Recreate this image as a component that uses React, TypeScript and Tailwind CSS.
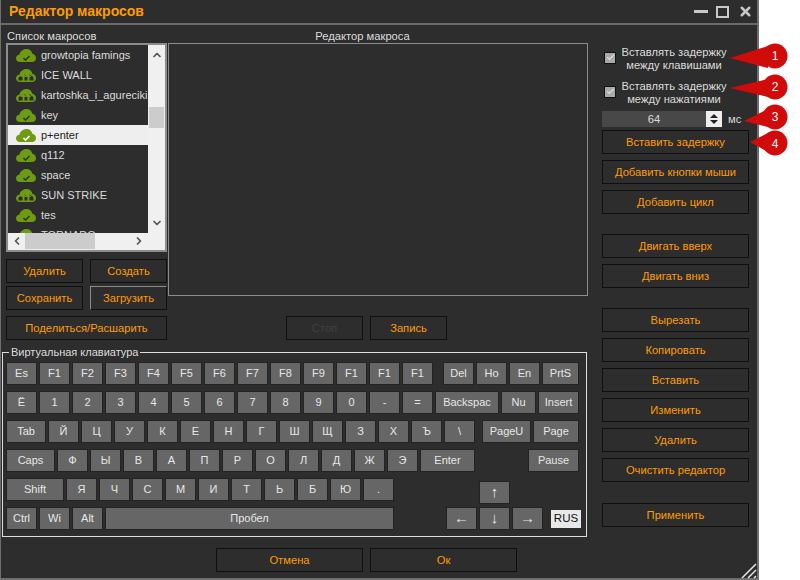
import React from "react";
import { ChevronUp, ChevronDown, ChevronLeft, ChevronRight, Check, X } from "lucide-react";

const font = { fontFamily: '"Liberation Sans", Arial, sans-serif' };

const macros = [
  { name: "growtopia famings", ok: true },
  { name: "ICE WALL", ok: false },
  { name: "kartoshka_i_agureciki", ok: false },
  { name: "key", ok: true },
  { name: "p+enter", ok: true, active: true },
  { name: "q112", ok: true },
  { name: "space", ok: true },
  { name: "SUN STRIKE", ok: false },
  { name: "tes", ok: true },
  { name: "TORNADO", ok: false },
];

type K = string | { t: string; c: string };

const rows: K[][] = [
  ["Es", "F1", "F2", "F3", "F4", "F5", "F6", "F7", "F8", "F9", "F1", "F1", "F1",
    { t: "Del", c: "w-[31px] ml-[8px]" }, "Ho", "En", { t: "PrtS", c: "w-[37px]" }],
  ["Ё", "1", "2", "3", "4", "5", "6", "7", "8", "9", "0", "-", "=",
    { t: "Backspac", c: "w-[64px]" }, { t: "Nu", c: "w-[35px]" }, { t: "Insert", c: "w-[41px]" }],
  [{ t: "Tab", c: "w-[40px]" }, "Й", "Ц", "У", "К", "Е", "Н", "Г", "Ш", "Щ", "З", "Х", "Ъ", "\\",
    { t: "PageU", c: "w-[49px] ml-[5px]" }, { t: "Page", c: "w-[46px]" }],
  [{ t: "Caps", c: "w-[49px]" }, "Ф", "Ы", "В", "А", "П", "Р", "О", "Л", "Д", "Ж", "Э",
    { t: "Enter", c: "w-[55px]" }, { t: "Pause", c: "w-[51px] ml-[51px]" }],
  [{ t: "Shift", c: "w-[58px]" }, "Я", "Ч", "С", "М", "И", "Т", "Ь", "Б", "Ю", ".",
    { t: "↑", c: "w-[31px] ml-[83px] mt-[3px]" }],
  ["Ctrl", "Wi", "Alt", { t: "Пробел", c: "w-[289px]" },
    { t: "←", c: "w-[31px] ml-[50px]" }, "↓", "→"],
];

const rightTop = ["Вставить задержку", "Добавить кнопки мыши", "Добавить цикл"];
const rightMove = ["Двигать вверх", "Двигать вниз"];
const rightEdit = ["Вырезать", "Копировать", "Вставить", "Изменить", "Удалить", "Очистить редактор"];

const cloudPath =
  "M4 14C1.600 14 0 12.400 0 10.300 0 8.300 1.500 6.800 3.400 6.700 4 3.500 7 1 10.500 1 13.600 1 15.800 3 16.300 5.800 18.500 6.200 20 8 20 10.200 20 12.400 18.400 14 16 14z";

const Cloud = ({ ok, active }: { ok: boolean; active?: boolean }) => (
  <svg width="20" height="15" viewBox="0 0 20 15" className="shrink-0">
    <path d={cloudPath} fill="#6d9c12" />
    {ok ? (
      <path
        d="M7.500 10l2 2 4-4"
        fill="none"
        stroke={active ? "#ffffff" : "#33381f"}
        strokeWidth="1.700"
      />
    ) : (
      <>
        <path d="M2.500 12.500h15V10.500c0-1.500-1-2.500-2.500-2.700L13.500 6 11.500 8.500H10.500L8 6 6 8.500C4 8 2.500 9 2.500 10.500z" fill="#2d2d2d" />
        <path d="M6.500 13V9H4.800L7.500 5.500 10.200 9H8.500v4zM11.500 13V9H9.800l2.700-3.500L15.200 9H13.500v4z" fill="#6d9c12" />
      </>
    )}
  </svg>
);

const Btn = ({ children, className = "", dim }: { children: React.ReactNode; className?: string; dim?: boolean }) => (
  <button
    className={`h-[24px] flex items-center justify-center border border-[#0f0f0f] text-[11.200px] ${dim ? "text-[#404040]" : "text-[#ff9c00]"} ${className}`}
  >
    {children}
  </button>
);

const Key = ({ k }: { k: K }) => {
  const label = typeof k === "string" ? k : k.t;
  const cls = typeof k === "string" ? "w-[31px]" : k.c;
  const arrow = label === "←" || label === "→" || label === "↑" || label === "↓";
  return (
    <div className={`h-[23px] shrink-0 overflow-hidden flex items-center justify-center bg-[#666666] border border-[#232323] text-[#e6e6e6] ${arrow ? "text-[15px]" : "text-[11px]"} ${cls}`}>
      {label}
    </div>
  );
};

const DelayOption = ({ top, bottom, className = "" }: { top: string; bottom: string; className?: string }) => (
  <div className={`flex items-center h-[28px] text-[11.200px] leading-[13.500px] text-[#dcdcdc] ${className}`}>
    <div className="w-[12px] h-[12px] ml-[2px] -mt-[3px] shrink-0 flex items-center justify-center bg-[#a9a9a9] border border-[#111111]">
      <Check size={9} strokeWidth={3} className="text-[#dddddd]" />
    </div>
    <div className="ml-[1px] w-[114px] shrink-0 text-center whitespace-nowrap">
      {top}
      <br />
      {bottom}
    </div>
  </div>
);

export default function App() {
  return (
    <div className="relative w-[800px] h-[580px] bg-white overflow-hidden" style={font}>
      <div className="w-[759px] h-[580px] flex flex-col bg-[#2d2d2d] border-l border-r-2 border-b-2 border-[#6f6f6f]">
        {/* TITLE */}
        <div className="h-[25px] shrink-0 flex items-center border-b-2 border-[#6a6a6a]">
          <div className="ml-[8px] text-[14px] font-bold text-[#ff9c00]">Редактор макросов</div>
          <div className="ml-auto flex items-center text-[#c8c8c8]">
            <div className="w-[14px] h-[3px] bg-[#c8c8c8]" />
            <div className="w-[13px] h-[12px] ml-[8px] border-2 border-[#c8c8c8]" />
            <X size={15} strokeWidth={4} className="ml-[9px] mr-[4px]" />
          </div>
        </div>

        <div className="flex-1 flex">
          {/* LEFT */}
          <div className="w-[587px] shrink-0">
            <div className="flex h-[315px]">
              <div className="w-[161px] ml-[5px] shrink-0">
                <div className="h-[18px] pl-[1px] pt-[4px] text-[11.200px] leading-[14px] text-[#dcdcdc]">Список макросов</div>

                {/* LIST */}
                <div className="relative h-[209px] border-2 border-[#8c8c8c] overflow-hidden">
                  {macros.map((m) => (
                    <div
                      key={m.name}
                      className={`h-[20px] w-[140px] flex items-center pl-[8px] gap-[5px] text-[11px] whitespace-nowrap ${m.active ? "bg-[#eeeeee] text-[#222222]" : "text-[#dcdcdc]"}`}
                    >
                      <Cloud ok={m.ok} active={m.active} />
                      {m.name}
                    </div>
                  ))}
                  <div className="absolute top-0 right-0 w-[17px] h-full bg-[#f0f0f0]">
                    <ChevronUp size={12} strokeWidth={3.5} className="absolute top-[4px] left-[3px] text-[#555555]" />
                    <div className="absolute top-[62px] left-[1px] w-[15px] h-[21px] bg-[#cccccc]" />
                    <ChevronDown size={12} strokeWidth={3.5} className="absolute top-[172px] left-[3px] text-[#555555]" />
                  </div>
                  <div className="absolute bottom-0 left-0 right-0 h-[17px] bg-[#f0f0f0]">
                    <ChevronLeft size={12} strokeWidth={3.5} className="absolute top-[2px] left-[3px] text-[#555555]" />
                    <div className="absolute top-0 left-[17px] w-[70px] h-[16px] bg-[#cccccc]" />
                    <ChevronRight size={12} strokeWidth={3.5} className="absolute top-[2px] left-[125px] text-[#555555]" />
                  </div>
                </div>

                <div className="grid grid-cols-[77px_77px] gap-x-[7px] gap-y-[3px] mt-[7px]">
                  <Btn>Удалить</Btn>
                  <Btn>Создать</Btn>
                  <Btn>Сохранить</Btn>
                  <Btn className="border-t-[#8c8c8c] border-l-[#8c8c8c]">Загрузить</Btn>
                </div>
                <Btn className="w-full mt-[6px]">Поделиться/Расшарить</Btn>
              </div>

              {/* EDITOR */}
              <div className="flex-1 ml-[1px] flex flex-col">
                <div className="h-[18px] pt-[4px] pr-[31px] text-center text-[11.200px] leading-[14px] text-[#dcdcdc]">Редактор макроса</div>
                <div className="h-[259px] border border-[#8c8c8c]" />
                <div className="flex justify-center gap-[7px] mt-[20px] pr-[23px]">
                  <Btn dim className="w-[77px]">Стоп</Btn>
                  <Btn className="w-[77px]">Запись</Btn>
                </div>
              </div>
            </div>

            {/* KEYBOARD */}
            <fieldset className="ml-[1px] mt-[5px] h-[192px] w-[585px] border border-[#dddddd] pl-[3px]">
              <legend className="ml-[3px] px-[2px] text-[11px] leading-[14px] text-[#dcdcdc]">Виртуальная клавиатура</legend>
              <div className="flex flex-col gap-[6px] pt-[3px]">
                {rows.map((row, i) => (
                  <div key={i} className="flex gap-[2px] h-[23px]">
                    {row.map((k, j) => (
                      <Key key={j} k={k} />
                    ))}
                    {i === 5 && (
                      <div className="ml-[6px] mt-[3px] w-[30px] h-[18px] flex items-center justify-center bg-[#e8e8e8] text-[11.500px] text-[#111111]">
                        RUS
                      </div>
                    )}
                  </div>
                ))}
              </div>
            </fieldset>

            <div className="flex gap-[7px] mt-[11px] pl-[215px]">
              <Btn className="w-[147px]">Отмена</Btn>
              <Btn className="w-[147px]">Ок</Btn>
            </div>
          </div>

          {/* RIGHT */}
          <div className="w-[147px] ml-[14px] shrink-0 pt-[20px]">
            <DelayOption top="Вставлять задержку" bottom="между клавишами" />
            <DelayOption className="mt-[6px]" top="Вставлять задержку" bottom="между нажатиями" />
            <div className="flex items-center h-[16px] mt-[4px]">
              <div className="w-[104px] h-[16px] bg-[#484848] text-center text-[11.200px] leading-[16px] text-[#dcdcdc]">64</div>
              <div className="w-[16px] h-[16px] bg-[#eeeeee] flex flex-col items-center justify-center gap-[2px]">
                <div className="w-0 h-0 border-x-[4px] border-x-transparent border-b-[4px] border-b-[#222222]" />
                <div className="w-0 h-0 border-x-[4px] border-x-transparent border-t-[4px] border-t-[#222222]" />
              </div>
              <div className="ml-[6px] text-[11.200px] text-[#dcdcdc]">мс</div>
            </div>

            <div className="flex flex-col gap-[6px] mt-[3px]">
              {rightTop.map((b) => (
                <Btn key={b} className="w-full">{b}</Btn>
              ))}
            </div>
            <div className="flex flex-col gap-[6px] mt-[20px]">
              {rightMove.map((b) => (
                <Btn key={b} className="w-full">{b}</Btn>
              ))}
            </div>
            <div className="flex flex-col gap-[6px] mt-[20px]">
              {rightEdit.map((b) => (
                <Btn key={b} className="w-full">{b}</Btn>
              ))}
            </div>
            <Btn className="w-full mt-[21px]">Применить</Btn>
          </div>
        </div>
      </div>

      {/* RESIZE GRIP */}
      <svg width="16" height="16" viewBox="0 0 16 16" className="absolute left-[741px] top-[563px]">
        <path d="M1 15L15 1M7 15l8-8M13 15l2-2" stroke="#e8e8e8" strokeWidth="1.500" fill="none" />
      </svg>

      {/* ANNOTATIONS */}
      <svg width="800" height="580" viewBox="0 0 800 580" className="absolute inset-0">
        <g fill="#d10a0a">
          <path d="M730 58L768 46V68z" />
          <circle cx="775" cy="56" r="12.500" />
          <path d="M730 88L768 79V97z" />
          <circle cx="775" cy="87" r="12.500" />
          <path d="M744 121L768 109V127z" />
          <circle cx="775" cy="117" r="12.500" />
          <path d="M750 142L768 133V152z" />
          <circle cx="775" cy="143" r="12.500" />
        </g>
        <g fill="#ffffff" fontSize="12" textAnchor="middle" style={font}>
          <text x="775" y="60">1</text>
          <text x="775" y="91">2</text>
          <text x="775" y="121">3</text>
          <text x="775" y="148">4</text>
        </g>
      </svg>
    </div>
  );
}
